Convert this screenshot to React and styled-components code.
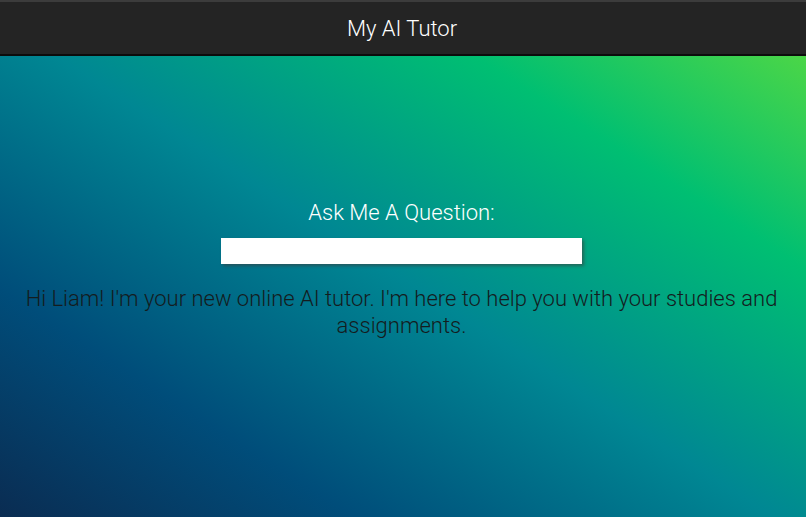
import React from "react";
import styled, { createGlobalStyle } from "styled-components";

const Global = createGlobalStyle`
  html, body { margin: 0; padding: 0; height: 100%; }
  body { font-family: Roboto, "Noto Sans", sans-serif; overflow: hidden; }
  #root { height: 100%; }
`;

const Page = styled.div`
  height: 517px;
  display: flex;
  flex-direction: column;
  background-image: linear-gradient(
    to right top,
    #0a2c52 0%,
    #004d7a 22%,
    #008793 48%,
    #00bf72 74%,
    #5fdc3c 100%
  );
`;

const Header = styled.header`
  height: 52px;
  background: #242424;
  border-top: 2px solid #3c3c3c;
  border-bottom: 2px solid #0c0c0c;
  display: flex;
  align-items: center;
  justify-content: center;
  padding-right: 2px;
  color: #fff;
  font-size: 22px;
  font-weight: 300;
  box-sizing: content-box;
  flex-shrink: 0;
`;

const Main = styled.main`
  display: flex;
  flex-direction: column;
  align-items: center;
  padding: 142px 3px 0 0;
`;

const Label = styled.label`
  color: #fff;
  font-size: 22px;
  font-weight: 300;
  line-height: 29px;
`;

const Input = styled.input`
  margin-top: 11px;
  width: 361px;
  height: 26px;
  box-sizing: border-box;
  border: none;
  background: #fff;
  box-shadow: 2px 2px 3px rgba(60, 60, 60, 0.6);
  outline: none;
  padding: 0 6px;
`;

const Message = styled.p`
  margin: 21px 0 0;
  padding: 0 16px;
  text-align: center;
  color: #141c1e;
  font-size: 22px;
  font-weight: 300;
  line-height: 27px;
`;

export default function App() {
  return (
    <>
      <Global />
      <Page>
        <Header>My AI Tutor</Header>
        <Main>
          <Label htmlFor="q">Ask Me A Question:</Label>
          <Input id="q" type="text" />
          <Message>
            Hi Liam! I'm your new online AI tutor. I'm here to help you with your studies and assignments.
          </Message>
        </Main>
      </Page>
    </>
  );
}
